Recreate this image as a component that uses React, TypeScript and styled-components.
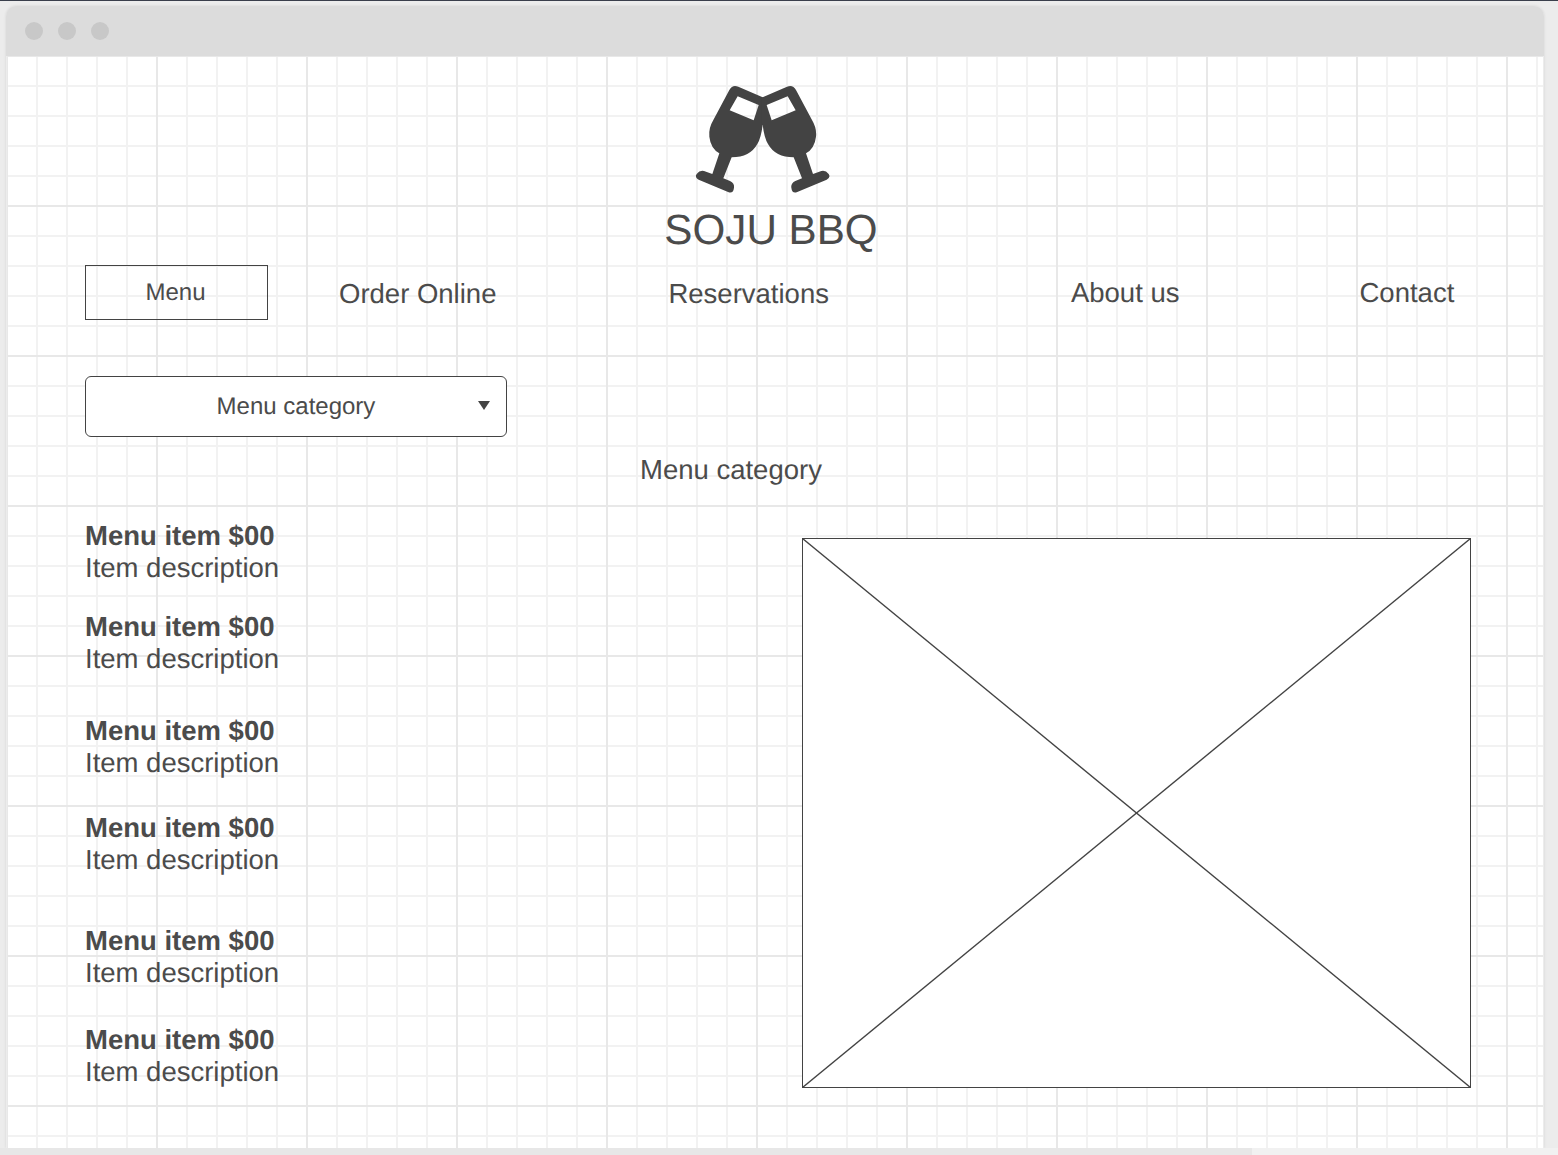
import React from 'react';
import styled, { createGlobalStyle } from 'styled-components';

const Global = createGlobalStyle`
  html, body { margin: 0; padding: 0; height: 100%; background: #ececec; overflow: hidden; }
  body {
    font-family: "Liberation Sans", Arial, sans-serif;
    color: #4b4b4b;
    text-rendering: geometricPrecision;
  }
`;

const Page = styled.div`
  width: 1558px;
  height: 1155px;
  box-sizing: border-box;
  display: flex;
  flex-direction: column;
  border-top: 1px solid #3a3f4c;
  padding-top: 5px;
  background: #ececec;
`;

const Frame = styled.div`
  flex: 0 0 1142px;
  margin: 0 14px 0 6px;
  display: flex;
  flex-direction: column;
  border-radius: 10px 10px 0 0;
  box-shadow: 0 0 3px rgba(0, 0, 0, 0.1);
  overflow: hidden;
`;

const TitleBar = styled.div`
  flex: 0 0 50px;
  display: flex;
  align-items: center;
  gap: 15px;
  padding-left: 19px;
  background: #dcdcdc;
`;

const Dot = styled.span`
  width: 18px;
  height: 18px;
  border-radius: 50%;
  background: #c8c8c8;
`;

const Canvas = styled.div`
  flex: 1;
  margin: 0 1px;
  padding: 14px 0 0 78px;
  background-color: #fff;
  background-image:
    linear-gradient(to right, #e8e8e8 2px, transparent 2px),
    linear-gradient(to bottom, #e8e8e8 2px, transparent 2px),
    linear-gradient(to right, #f2f2f2 2px, transparent 2px),
    linear-gradient(to bottom, #f2f2f2 2px, transparent 2px);
  background-size: 150px 150px, 150px 150px, 30px 30px, 30px 30px;
  background-position: -1px -1px;
`;

const ScrollTrack = styled.div`
  flex: 1;
  background: #f1f1f1;
`;

const ScrollThumb = styled.div`
  width: 1252px;
  height: 100%;
  background: #e7e7e7;
`;

const Brand = styled.header`
  display: flex;
  flex-direction: column;
  align-items: center;
  width: 1372px;
`;

const LogoMark = styled.svg`
  display: block;
  width: 170px;
  height: 130px;
  margin-left: -12px;
  fill: #434343;
`;

const Title = styled.h1`
  margin: 6px 0 0;
  font-size: 42.2px;
  line-height: 48px;
  font-weight: 400;
`;

const Nav = styled.nav`
  display: flex;
  align-items: center;
  height: 55px;
  margin-top: 11px;
`;

const MenuButton = styled.button`
  width: 183px;
  height: 55px;
  box-sizing: border-box;
  padding: 0 2px 0 0;
  border: 1px solid #434343;
  background: transparent;
  color: #4b4b4b;
  font: 24px "Liberation Sans", Arial, sans-serif;
  text-rendering: geometricPrecision;
  margin-right: 71px;
`;

const NavLink = styled.a<{ $gap: number; $drop: number }>`
  margin-right: ${p => p.$gap}px;
  padding-top: ${p => p.$drop}px;
  font-size: 27.5px;
  line-height: 32px;
  white-space: nowrap;
`;

const Select = styled.div`
  position: relative;
  width: 422px;
  height: 61px;
  margin-top: 56px;
  box-sizing: border-box;
  display: flex;
  align-items: center;
  justify-content: center;
  border: 1px solid #434343;
  border-radius: 6px;
  background: #fff;
  font-size: 24px;
`;

const Caret = styled.span`
  position: absolute;
  right: 16px;
  top: 24px;
  width: 0;
  height: 0;
  border-left: 6px solid transparent;
  border-right: 6px solid transparent;
  border-top: 9px solid #434343;
`;

const CategoryHeading = styled.h2`
  margin: 17px 0 0 555px;
  font-size: 27.5px;
  line-height: 32px;
  font-weight: 400;
`;

const Content = styled.div`
  display: flex;
  justify-content: space-between;
  width: 1386px;
`;

const ItemList = styled.ul`
  list-style: none;
  margin: 34px 0 0;
  padding: 0;
`;

const Item = styled.li<{ $gap: number }>`
  margin-top: ${p => p.$gap}px;
  font-size: 27.5px;
  line-height: 32px;
`;

const ItemName = styled.div`
  font-weight: 700;
`;

const ImagePlaceholder = styled.svg`
  display: block;
  flex: none;
  width: 669px;
  height: 550px;
  margin-top: 52px;
  background: #fff;
`;

const gaps = [0, 27, 40, 33, 49, 35];

const GLASS =
  'M165 48 Q155 48 148 60 L100 150 Q85 175 88 200 Q92 235 118 250 L97 312 L72 303 Q59 300 50 312 Q43 322 56 329 ' +
  'L146 367 Q160 371 162 353 Q164 340 150 333 L130 325 L155 262 Q210 262 232 222 Q243 205 248 165 L251 165 L251 83 L248 82 L175 50 Q170 48 165 48 Z ' +
  'M173 79 L236 105 L221 151 L149 121 Z';

export default function App() {
  return (
    <Page>
      <Global />
      <Frame>
        <TitleBar>
          <Dot />
          <Dot />
          <Dot />
        </TitleBar>
        <Canvas>
          <Brand>
            <LogoMark viewBox="0 0 510 390" aria-label="Soju BBQ logo">
              <path d={GLASS} fillRule="evenodd" />
              <path d={GLASS} fillRule="evenodd" transform="matrix(-1 0 0 1 496 0)" />
            </LogoMark>
            <Title>SOJU BBQ</Title>
          </Brand>
          <Nav>
            <MenuButton>Menu</MenuButton>
            <NavLink $gap={172} $drop={3}>Order Online</NavLink>
            <NavLink $gap={242} $drop={3}>Reservations</NavLink>
            <NavLink $gap={180} $drop={1}>About us</NavLink>
            <NavLink $gap={0} $drop={1}>Contact</NavLink>
          </Nav>
          <Select>
            Menu category
            <Caret />
          </Select>
          <CategoryHeading>Menu category</CategoryHeading>
          <Content>
            <ItemList>
              {gaps.map((g, i) => (
                <Item key={i} $gap={g}>
                  <ItemName>Menu item $00</ItemName>
                  <div>Item description</div>
                </Item>
              ))}
            </ItemList>
            <ImagePlaceholder viewBox="0 0 669 550" aria-label="Image placeholder">
              <rect x="0.5" y="0.5" width="668" height="549" fill="#fff" stroke="#434343" strokeWidth="1" />
              <line x1="0.5" y1="0.5" x2="668.5" y2="549.5" stroke="#434343" strokeWidth="1.4" />
              <line x1="668.5" y1="0.5" x2="0.5" y2="549.5" stroke="#434343" strokeWidth="1.4" />
            </ImagePlaceholder>
          </Content>
        </Canvas>
      </Frame>
      <ScrollTrack>
        <ScrollThumb />
      </ScrollTrack>
    </Page>
  );
}
